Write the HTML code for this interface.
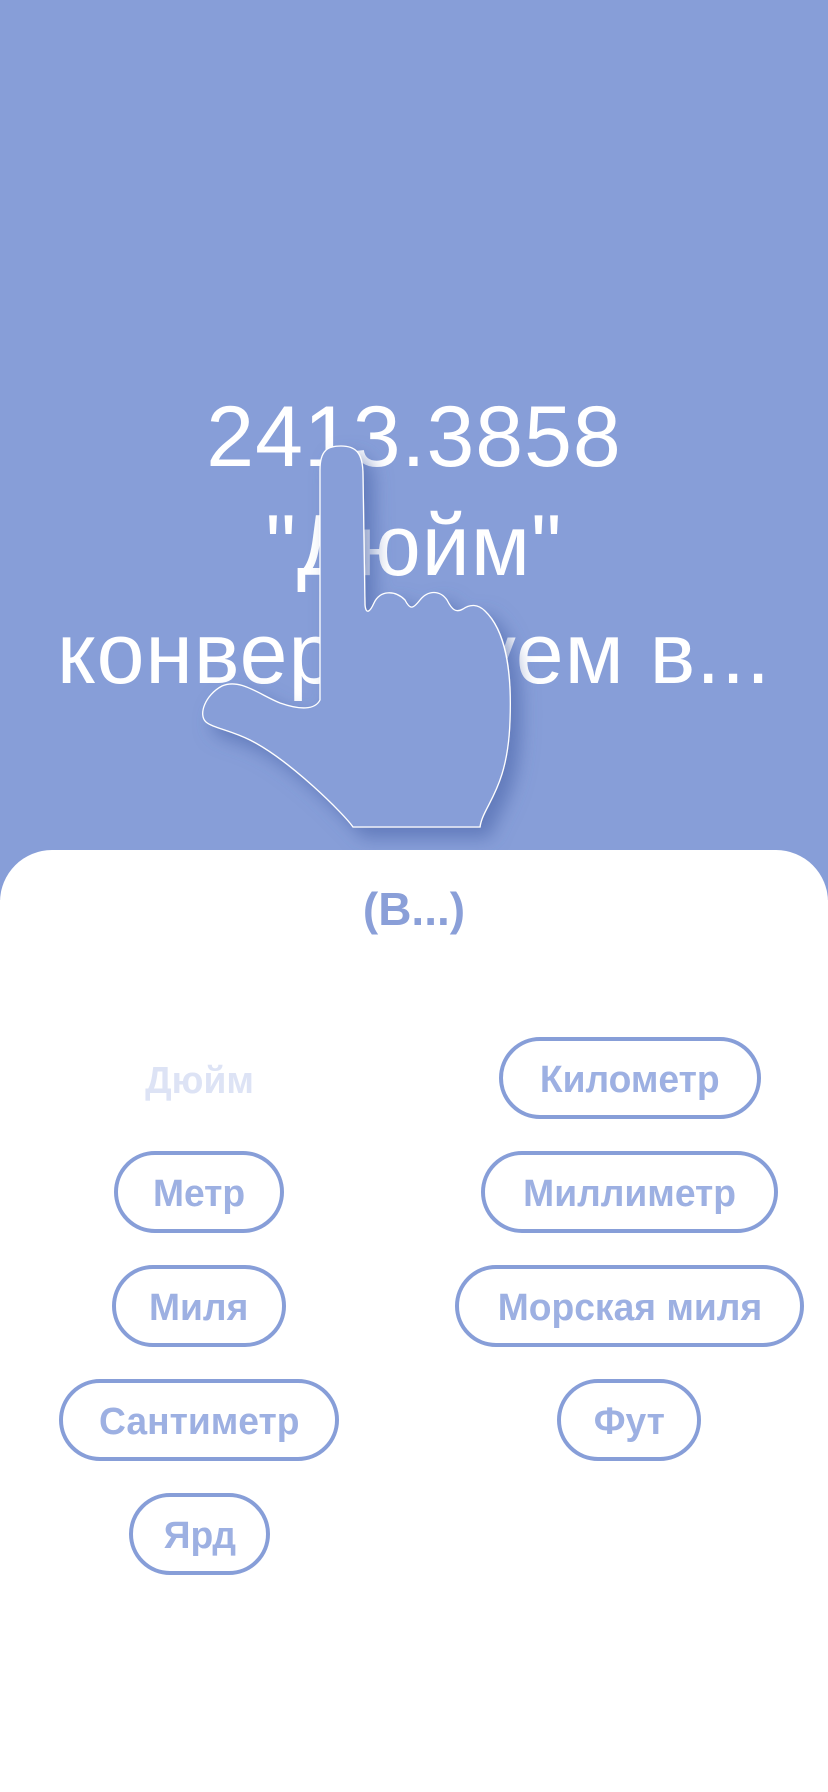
<!DOCTYPE html>
<html><head><meta charset="utf-8"><style>
*{margin:0;padding:0;box-sizing:border-box}
body{width:828px;height:1792px;position:relative;overflow:hidden;background:#fff;font-family:"Liberation Sans",sans-serif}
.top{position:absolute;left:0;top:0;width:828px;height:900px;background:#879ed8}
.big{position:absolute;left:0;width:828px;text-align:center;color:#fff;font-size:86px;line-height:108px;letter-spacing:1px}
.sheet{position:absolute;left:0;top:850px;width:828px;height:942px;background:#fff;border-radius:52px 52px 0 0}
.title{position:absolute;left:0;width:828px;top:882px;text-align:center;color:#8a9fd8;font-weight:bold;font-size:46px}
.pill{position:absolute;height:82px;border:4px solid #879ed8;border-radius:41px;display:flex;align-items:center;justify-content:center;color:#9db0e2;font-weight:bold;font-size:38px;white-space:nowrap;padding-top:4px}
.pill span{display:inline-block;transform:scaleX(0.98)}
.pill.off{border:none;color:#dde3f5}
svg{position:absolute;left:0;top:0}
</style></head><body>
<div class="top"></div>
<div class="big" style="top:383px">2413.3858</div>
<div class="big" style="top:492px">"Дюйм"</div>
<div class="big" style="top:600px">конвертируем в...</div>
<svg width="828" height="1792" viewBox="0 0 828 1792">
<defs><filter id="s" x="-30%" y="-30%" width="160%" height="160%"><feDropShadow dx="10" dy="10" stdDeviation="9" flood-color="#4a62a8" flood-opacity="0.6"/></filter></defs>
<path filter="url(#s)" fill="#879ed8" stroke="#fff" stroke-width="1.3" d="M320,700 L320,470 C320,450 328,446 341,446 C355,446 363,452 363,475 L365,605 C366,615 370,612 374,603 C380,590 395,590 405,600 C410,610 413,609 420,600 C428,590 440,590 447,600 C452,610 456,613 463,609 C470,604 478,604 485,611 C505,630 512,670 510,720 C508,790 483,805 480,827 L353,827 C345,815 290,760 250,740 C230,730 213,728 206,722 C198,715 205,695 222,686 C240,678 260,695 280,703 C300,710 315,710 320,700 Z"/>
</svg>
<div class="sheet"></div>
<div class="title">(В...)</div>
<div class="pill off" style="left:114px;width:170px;top:1038px"><span>Дюйм</span></div>
<div class="pill" style="left:499px;width:262px;top:1037px"><span>Километр</span></div>
<div class="pill" style="left:114px;width:170px;top:1151px"><span>Метр</span></div>
<div class="pill" style="left:481px;width:297px;top:1151px"><span>Миллиметр</span></div>
<div class="pill" style="left:112px;width:174px;top:1265px"><span>Миля</span></div>
<div class="pill" style="left:455px;width:349px;top:1265px"><span>Морская миля</span></div>
<div class="pill" style="left:59px;width:280px;top:1379px"><span>Сантиметр</span></div>
<div class="pill" style="left:557px;width:144px;top:1379px"><span>Фут</span></div>
<div class="pill" style="left:129px;width:141px;top:1493px"><span>Ярд</span></div>
</body></html>
